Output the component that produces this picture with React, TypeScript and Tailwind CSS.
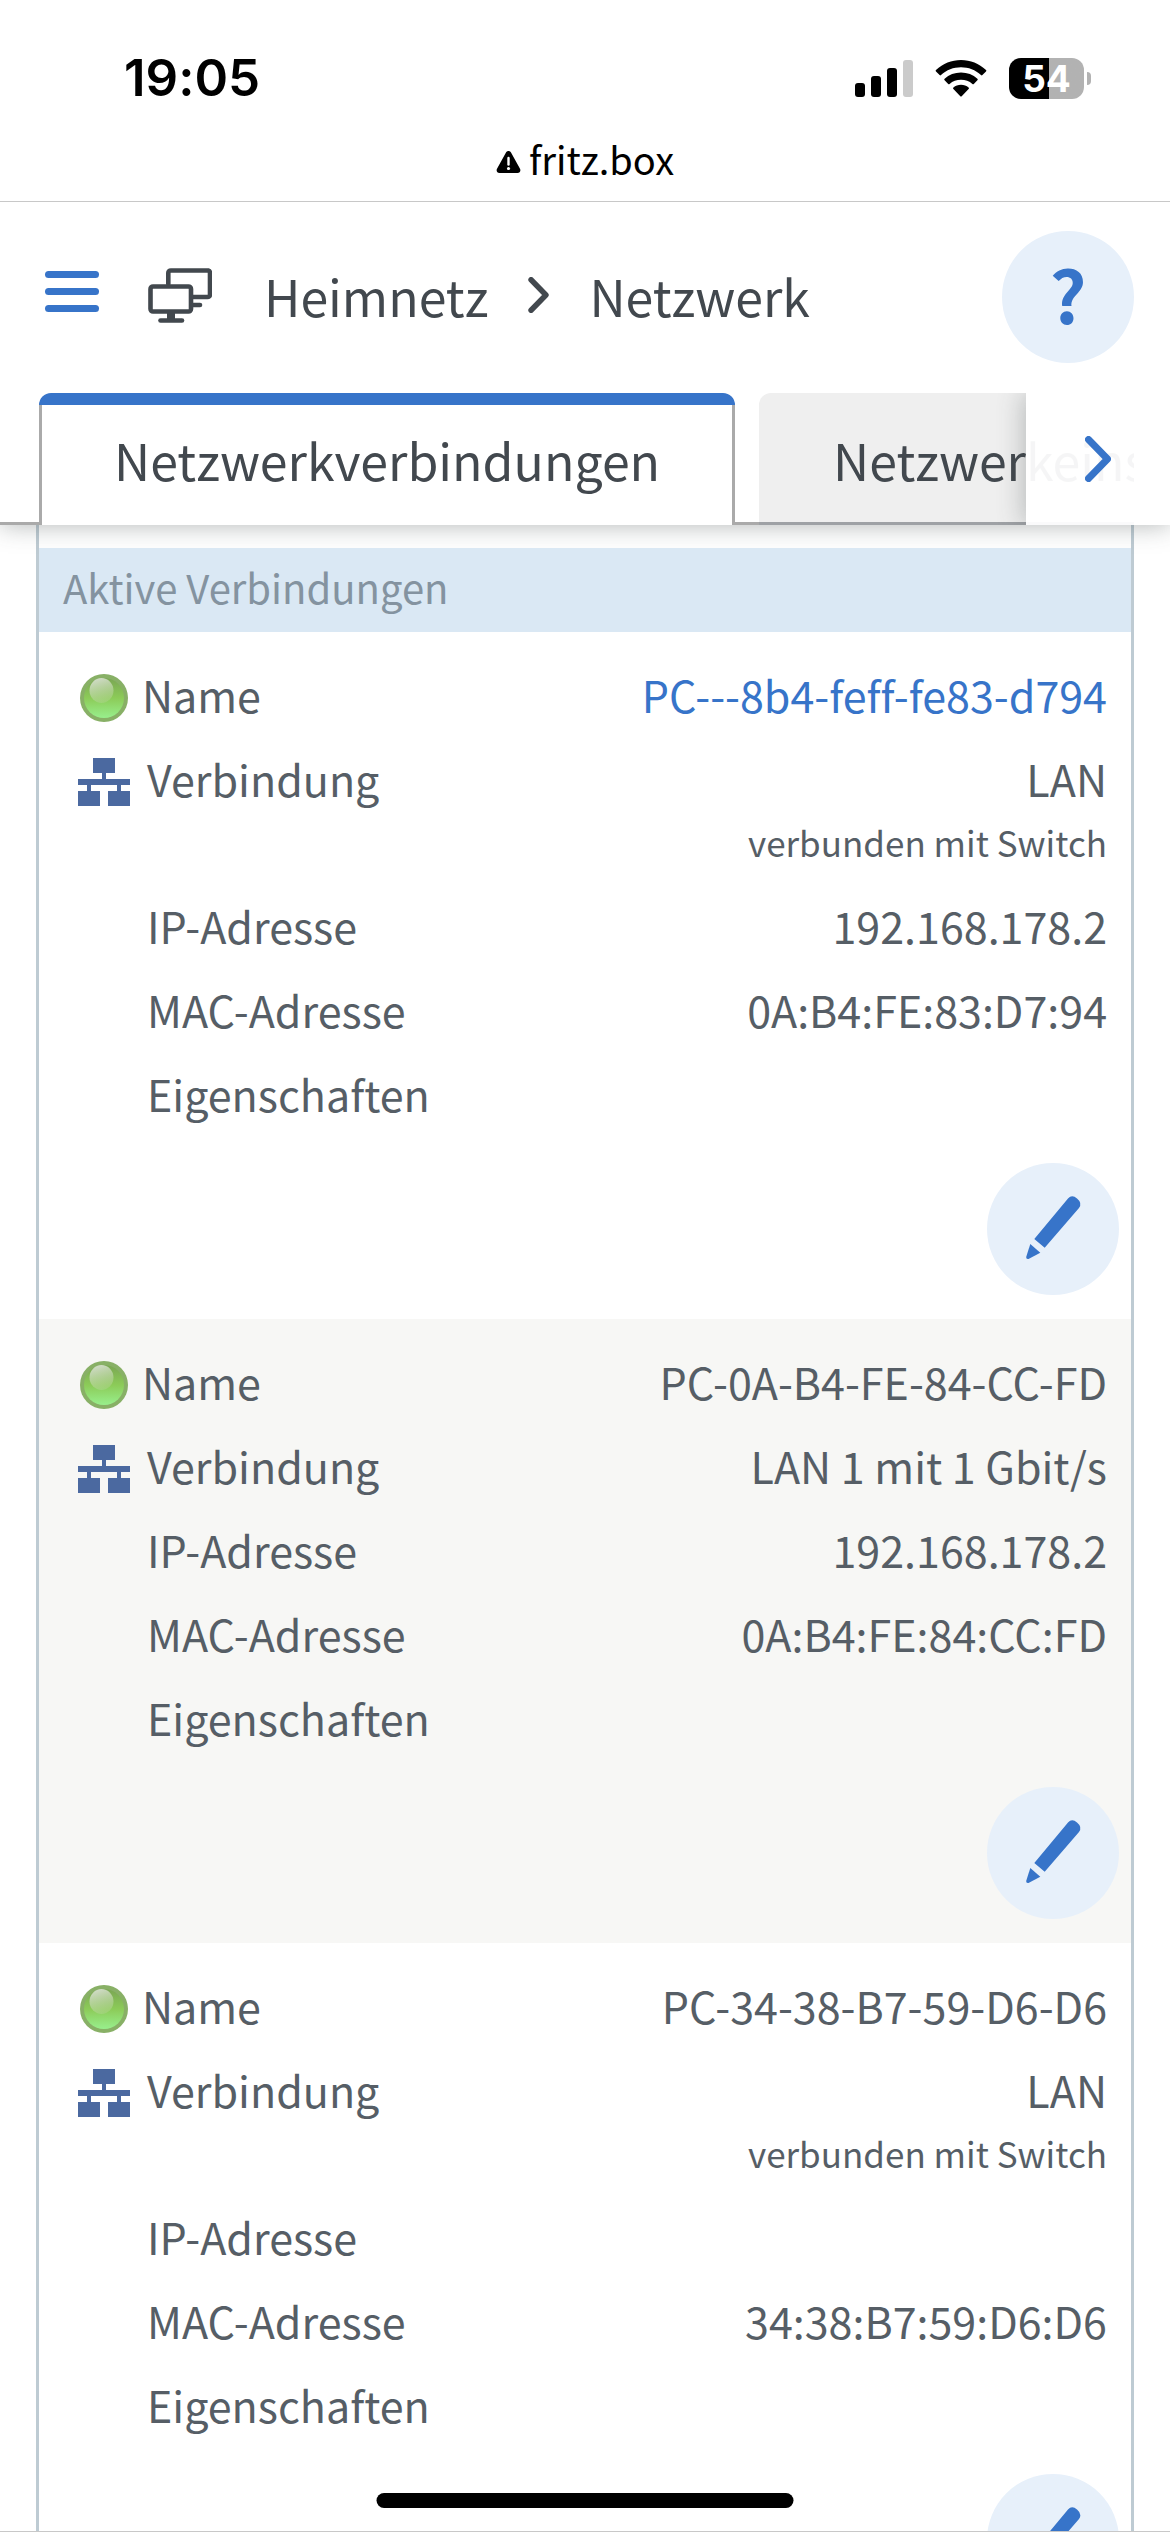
import type { ReactNode } from 'react';
import clsx from 'clsx';

interface Device {
  name: string;
  isLink?: boolean;
  connection: string;
  via?: string;
  ip?: string;
  mac: string;
}

const DEVICES: Device[] = [
  {
    name: 'PC---8b4-feff-fe83-d794',
    isLink: true,
    connection: 'LAN',
    via: 'verbunden mit Switch',
    ip: '192.168.178.2',
    mac: '0A:B4:FE:83:D7:94',
  },
  {
    name: 'PC-0A-B4-FE-84-CC-FD',
    connection: 'LAN 1 mit 1 Gbit/s',
    ip: '192.168.178.2',
    mac: '0A:B4:FE:84:CC:FD',
  },
  {
    name: 'PC-34-38-B7-59-D6-D6',
    connection: 'LAN',
    via: 'verbunden mit Switch',
    mac: '34:38:B7:59:D6:D6',
  },
];

function SignalIcon() {
  return (
    <svg className="h-[38px] w-[58px]" viewBox="0 0 58 38" aria-hidden="true">
      <rect x="0" y="24" width="10" height="14" rx="3" />
      <rect x="16" y="17" width="10" height="21" rx="3" />
      <rect x="32" y="9" width="10" height="29" rx="3" />
      <rect x="48" y="1" width="10" height="37" rx="3" fill="#cbcbcb" />
    </svg>
  );
}

function WifiIcon() {
  return (
    <svg className="h-[38px] w-[52px]" viewBox="0 0 52 38" aria-hidden="true">
      <path d="M1 12.5a1 1 0 0 1 0-1.5C8 4.500 16.500 1 26 1s18 3.500 25 10a1 1 0 0 1 0 1.500l-3.600 3.600a1 1 0 0 1-1.400 0C40.500 11 33.500 8.300 26 8.300S11.500 11 6 16.100a1 1 0 0 1-1.400 0Z" />
      <path d="M9.600 21.300a1 1 0 0 1 0-1.500C14 15.800 19.700 13.600 26 13.600s12 2.200 16.400 6.200a1 1 0 0 1 0 1.500L38.800 25a1 1 0 0 1-1.400 0c-3.100-2.800-7-4.200-11.400-4.200S17.700 22.200 14.600 25a1 1 0 0 1-1.400 0Z" />
      <path d="M18.400 30a1 1 0 0 1 0-1.500c2.100-1.800 4.700-2.800 7.600-2.800s5.500 1 7.600 2.800a1 1 0 0 1 0 1.500l-6.900 7.200a1 1 0 0 1-1.400 0Z" />
    </svg>
  );
}

function Battery() {
  return (
    <div className="flex items-center gap-[3px]">
      <div className="flex h-[41px] w-[75px] items-center justify-center rounded-[12px] bg-linear-to-r from-black from-54% to-[#b2b2b2] to-54% text-[37px] leading-[41px] font-bold text-white">
        54
      </div>
      <div className="h-[13px] w-[4px] rounded-r-full bg-[#b2b2b2]" />
    </div>
  );
}

function StatusBar() {
  return (
    <div className="flex items-center justify-between pt-[48px] pr-[79px] pl-[124px] font-[Inter,sans-serif] text-black">
      <time className="text-[51px] leading-[60px] font-semibold">19:05</time>
      <div className="flex items-center gap-[22px]">
        <SignalIcon />
        <WifiIcon />
        <Battery />
      </div>
    </div>
  );
}

function AddressBar() {
  return (
    <div className="flex h-[94px] items-center justify-center gap-2 border-b border-[#c8c8c8] pt-[8px] text-[38px] leading-[48px] text-black">
      <svg className="mt-[6px] h-[22px] w-[25px]" viewBox="0 0 25 22" aria-hidden="true">
        <path d="M10 1.500c1.100-2 3.900-2 5 0l9 16.300c1 1.900 0 4.200-2.500 4.200h-18C1 22 0 19.700 1 17.800Z" />
        <path d="M12.500 7v6.500" stroke="#fff" strokeWidth="2.400" strokeLinecap="round" />
        <circle cx="12.500" cy="17.500" r="1.600" fill="#fff" />
      </svg>
      <span>fritz.box</span>
    </div>
  );
}

function HomeNetworkIcon() {
  return (
    <svg
      className="h-[56px] w-[64px]"
      viewBox="0 0 64 56"
      fill="none"
      stroke="#42484e"
      strokeWidth="4.600"
      strokeLinecap="round"
      strokeLinejoin="round"
      aria-hidden="true"
    >
      <path d="M20.300 17V6a2.500 2.500 0 0 1 2.500-2.500h37.400A2.500 2.500 0 0 1 62 6v21.500a2.500 2.500 0 0 1-2.500 2.500H44" />
      <rect x="2.500" y="19.500" width="40.500" height="25" rx="2.500" />
      <path d="M45 38h7" />
      <path d="M23 45v8" strokeWidth="8" strokeLinecap="butt" />
      <path d="M12.500 53.500h21.500" />
    </svg>
  );
}

function Chevron({ className }: { className: string }) {
  return (
    <svg className={className} viewBox="0 0 26 46" fill="none" stroke="currentColor" aria-hidden="true">
      <path d="M3.500 3.500 22.500 23l-19 19.500" strokeWidth="7" strokeLinecap="round" strokeLinejoin="round" />
    </svg>
  );
}

function PageHeader() {
  return (
    <header className="flex h-[191px] items-center pr-[36px] pb-[2px] pl-[45px] text-[#42484e]">
      <button type="button" aria-label="Menü" className="flex w-[54px] flex-col gap-[10px] pb-[10px]">
        <span className="h-[7px] w-full rounded-full bg-[#3774c9]" />
        <span className="h-[7px] w-full rounded-full bg-[#3774c9]" />
        <span className="h-[7px] w-full rounded-full bg-[#3774c9]" />
      </button>
      <nav aria-label="Pfad" className="ml-[49px] flex flex-1 items-center pb-[4px] text-[50px] leading-[72px]">
        <HomeNetworkIcon />
        <a href="#heimnetz" className="ml-[52px]">
          Heimnetz
        </a>
        <Chevron className="mx-[40px] h-[36px] w-[21px]" />
        <a href="#netzwerk">Netzwerk</a>
      </nav>
      <button
        type="button"
        aria-label="Hilfe"
        className="flex size-[132px] items-center justify-center rounded-full bg-[#e7f0fa] pb-[8px] text-[72px] leading-[124px] font-bold text-[#3774c9]"
      >
        ?
      </button>
    </header>
  );
}

function TabBar() {
  return (
    <div className="relative z-10 bg-white shadow-[0_0_24px_rgba(60,70,70,0.4)] [clip-path:inset(0_0_-30px_0)]">
      <div role="tablist" className="mr-[36px] flex h-[132px] overflow-hidden text-[50px] leading-[72px] whitespace-nowrap text-[#42484e]">
        <div className="w-[39px] shrink-0 border-b-[3px] border-[#aaa]" />
        <div className="flex shrink-0 flex-col">
          <div className="h-[12px] rounded-t-[12px] bg-[#3774c9]" />
          <button type="button" role="tab" aria-selected="true" className="flex-1 border-x-[3px] border-[#aaa] px-[72px] pb-[13px]">
            Netzwerkverbindungen
          </button>
        </div>
        <div className="w-[24px] shrink-0 border-b-[3px] border-[#aaa]" />
        <button
          type="button"
          role="tab"
          aria-selected="false"
          className="shrink-0 rounded-t-[12px] border-b-[3px] border-[#9ea1a5] bg-[#efefef] px-[74px] pt-[12px] pb-[10px]"
        >
          Netzwerkeinstellungen
        </button>
      </div>
      <div className="absolute inset-y-0 right-0 w-[180px] overflow-hidden">
        <button
          type="button"
          aria-label="Weitere Tabs"
          className="ml-[36px] flex h-full w-[144px] items-center justify-center bg-white/95 text-[#3774c9] shadow-[-3px_0_24px_rgba(60,70,70,0.3)]"
        >
          <Chevron className="h-[46px] w-[26px]" />
        </button>
      </div>
    </div>
  );
}

function StatusLed() {
  return (
    <svg className="size-[48px]" viewBox="0 0 48 48" role="img" aria-label="aktiv">
      <defs>
        <linearGradient id="led" x1="0" y1="0" x2="0" y2="1">
          <stop offset="0" stopColor="#7aa653" />
          <stop offset="0.500" stopColor="#8ccb58" />
          <stop offset="1" stopColor="#98ef8c" />
        </linearGradient>
        <linearGradient id="gloss" x1="0.300" y1="0" x2="0.600" y2="1">
          <stop offset="0" stopColor="#dde3d8" stopOpacity="0.900" />
          <stop offset="1" stopColor="#b8d49a" stopOpacity="0.350" />
        </linearGradient>
      </defs>
      <circle cx="24" cy="24" r="24" fill="#88b066" />
      <circle cx="24" cy="24" r="20" fill="url(#led)" />
      <ellipse cx="21.500" cy="16.500" rx="12" ry="12.500" fill="url(#gloss)" />
    </svg>
  );
}

function LanIcon() {
  return (
    <svg className="h-[48px] w-[52px]" viewBox="0 0 52 48" fill="#4b69a0" aria-hidden="true">
      <path d="M15 0h22v15H28v6h24v6h-9v6h9v15H30V33h9v-6H13v6h9v15H0V33h9v-6H0v-6h24v-6h-9Z" />
    </svg>
  );
}

function PencilIcon() {
  return (
    <svg className="size-[132px]" viewBox="0 0 132 132" fill="#3774c9" aria-hidden="true">
      <path d="M47.300 76 81 35.500Q85 31 90 35.500 95.500 40 92 45L57.700 84.700Z" />
      <path d="M43.300 81 53.300 89.700 41.500 96Q39 96.500 39.200 94Z" />
    </svg>
  );
}

interface RowProps {
  label: string;
  icon?: ReactNode;
  iconWidth?: string;
  children?: ReactNode;
}

function Row({ label, icon, iconWidth = 'w-[69px]', children }: RowProps) {
  return (
    <div className="flex min-h-[84px] items-start justify-between pr-[24px] pl-[39px] leading-[76px]">
      <dt className="flex items-start">
        <span className={clsx('flex h-[84px] items-center', iconWidth)}>{icon}</span>
        {label}
      </dt>
      <dd className="text-right">{children}</dd>
    </div>
  );
}

function DeviceEntry({ device }: { device: Device }) {
  return (
    <li className="py-[24px] even:bg-[#f7f7f5]">
      <dl>
        <Row label="Name" icon={<span className="ml-[2px]"><StatusLed /></span>} iconWidth="w-[64px]">
          {device.isLink ? (
            <a href="#geraet" className="text-[#3774c9]">
              {device.name}
            </a>
          ) : (
            device.name
          )}
        </Row>
        <Row label="Verbindung" icon={<LanIcon />}>
          {device.connection}
          {device.via && <div className="pt-[5px] pb-[24px] text-[35px] leading-[42px]">{device.via}</div>}
        </Row>
        <Row label="IP-Adresse">{device.ip}</Row>
        <Row label="MAC-Adresse">{device.mac}</Row>
        <Row label="Eigenschaften" />
      </dl>
      <div className="flex justify-end pt-[24px] pr-[12px]">
        <button type="button" aria-label={`${device.name} bearbeiten`} className="rounded-full bg-[#e7f0fa]">
          <PencilIcon />
        </button>
      </div>
    </li>
  );
}

export default function App() {
  return (
    <div className="relative flex h-screen flex-col overflow-hidden border-b border-[#c8c8c8] bg-white font-['Noto_Sans_CJK_SC','Noto_Sans',sans-serif] [font-variant-ligatures:none]">
      <StatusBar />
      <AddressBar />
      <PageHeader />
      <TabBar />
      <main className="mx-[36px] min-h-0 flex-1 overflow-hidden border-x-[3px] border-[#becbd3] pt-[23px] text-[43px] text-[#565e66]">
        <h2 className="relative z-20 bg-[#dae8f4] px-[24px] pb-[6px] text-[40px] leading-[78px] text-[#8493a0]">Aktive Verbindungen</h2>
        <ul>
          {DEVICES.map((device) => (
            <DeviceEntry key={device.mac} device={device} />
          ))}
        </ul>
      </main>
      <div className="absolute bottom-[23px] left-1/2 h-[15px] w-[417px] -translate-x-1/2 rounded-full bg-black" />
    </div>
  );
}
